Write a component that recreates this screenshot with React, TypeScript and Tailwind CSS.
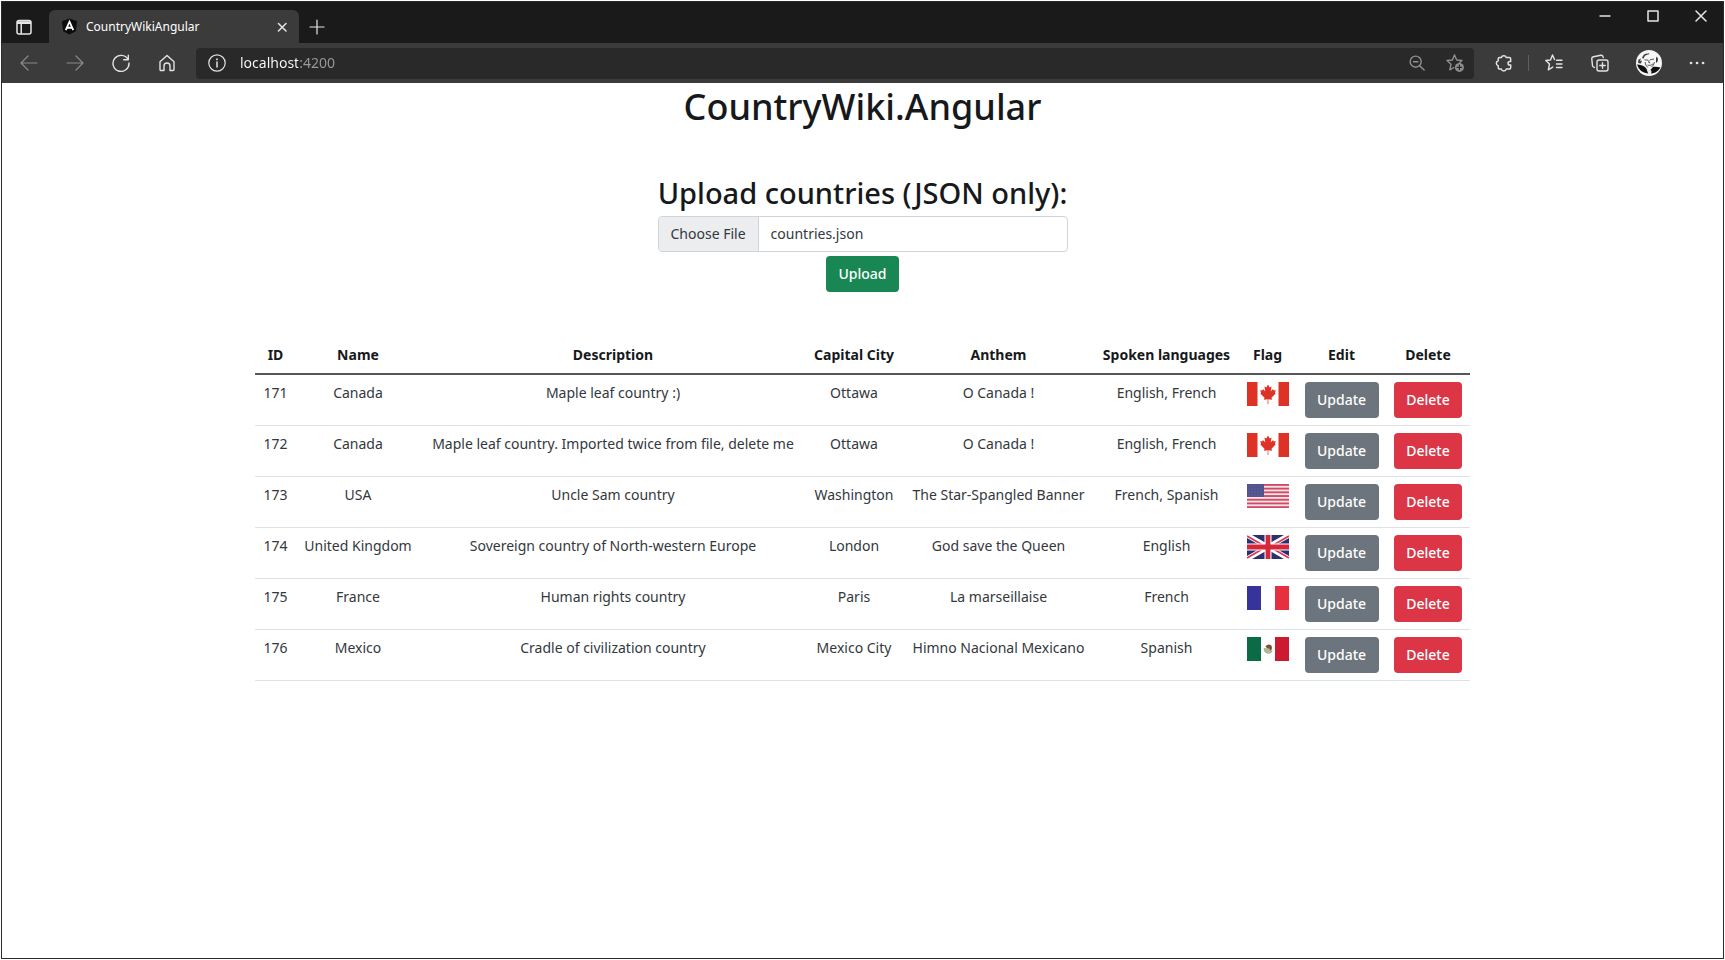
import type { ReactNode } from 'react';

type FlagCode = 'ca' | 'us' | 'gb' | 'fr' | 'mx';

interface Country {
  id: number;
  name: string;
  description: string;
  capital: string;
  anthem: string;
  languages: string;
  flag: FlagCode;
}

const countries: Country[] = [
  { id: 171, name: 'Canada', description: 'Maple leaf country :)', capital: 'Ottawa', anthem: 'O Canada !', languages: 'English, French', flag: 'ca' },
  { id: 172, name: 'Canada', description: 'Maple leaf country. Imported twice from file, delete me', capital: 'Ottawa', anthem: 'O Canada !', languages: 'English, French', flag: 'ca' },
  { id: 173, name: 'USA', description: 'Uncle Sam country', capital: 'Washington', anthem: 'The Star-Spangled Banner', languages: 'French, Spanish', flag: 'us' },
  { id: 174, name: 'United Kingdom', description: 'Sovereign country of North-western Europe', capital: 'London', anthem: 'God save the Queen', languages: 'English', flag: 'gb' },
  { id: 175, name: 'France', description: 'Human rights country', capital: 'Paris', anthem: 'La marseillaise', languages: 'French', flag: 'fr' },
  { id: 176, name: 'Mexico', description: 'Cradle of civilization country', capital: 'Mexico City', anthem: 'Himno Nacional Mexicano', languages: 'Spanish', flag: 'mx' },
];

const headings = ['ID', 'Name', 'Description', 'Capital City', 'Anthem', 'Spoken languages', 'Flag', 'Edit', 'Delete'];

const flagArt: Record<FlagCode, ReactNode> = {
  ca: (
    <>
      <rect width="42" height="24" fill="#fff" />
      <rect width="10.5" height="24" fill="#de3226" />
      <rect x="31.5" width="10.5" height="24" fill="#de3226" />
      <path
        d="M21 2.500l-1.700 3-1.900-.9.9 4.600-2.400-2.200-.5 1.400-2.200-.4.9 3-.8.6 4.200 4.200-.6 2 3.800-.6-.1 4.800h.8l-.1-4.800 3.800.6-.6-2 4.200-4.200-.8-.6.9-3-2.200.4-.5-1.400-2.400 2.200.9-4.600-1.900.9z"
        fill="#de3226"
      />
    </>
  ),
  us: (
    <>
      <rect width="42" height="24" fill="#f6e4e8" />
      {[0, 1, 2, 3, 4, 5, 6].map((n) => (
        <rect key={n} y={n * 3.7} width="42" height="1.85" fill="#cf4a64" />
      ))}
      <rect width="17" height="12.9" fill="#51538c" />
      {[2, 5, 8, 11].map((y) => (
        <path key={y} d={`M1.5 ${y}h15`} stroke="#7475a6" strokeWidth="0.8" strokeDasharray="1 2" />
      ))}
    </>
  ),
  gb: (
    <>
      <rect width="42" height="24" fill="#2d2f73" />
      <path d="M0 0l42 24M42 0L0 24" stroke="#fff" strokeWidth="5" />
      <path d="M0 1l19 11M42 23L23 12M42 1L23 12M0 23l19-11" stroke="#d93a4c" strokeWidth="1.8" />
      <path d="M21 0v24M0 12h42" stroke="#fff" strokeWidth="7" />
      <path d="M21 0v24M0 12h42" stroke="#d5263c" strokeWidth="4.8" />
    </>
  ),
  fr: (
    <>
      <rect width="42" height="24" fill="#fff" />
      <rect width="14" height="24" fill="#36339a" />
      <rect x="28" width="14" height="24" fill="#e6303f" />
    </>
  ),
  mx: (
    <>
      <rect width="42" height="24" fill="#fff" />
      <rect width="14" height="24" fill="#0b6b47" />
      <rect x="28" width="14" height="24" fill="#cc1b30" />
      <path d="M17.500 11a4 4.600 0 0 0 7.500 2.500" fill="none" stroke="#8fb8a4" strokeWidth="1.600" />
      <ellipse cx="21" cy="12.800" rx="3" ry="2.600" fill="#b9b690" />
      <path d="M18.500 9.500c1-2 4.500-2.800 5.800-1 1.200 2 .8 4-.8 5.500-.2-1.800-1.200-2.600-2.600-2.800-1-.2-2-.8-2.400-1.700z" fill="#7d5334" />
    </>
  ),
};

function Flag({ code, country }: { code: FlagCode; country: string }) {
  return (
    <svg role="img" aria-label={country} viewBox="0 0 42 24" className="mx-auto block h-6 w-[42px]">
      {flagArt[code]}
    </svg>
  );
}

function Icon({ size = 'size-[18px]', width = 1.2, children }: { size?: string; width?: number; children: ReactNode }) {
  return (
    <svg viewBox="0 0 18 18" fill="none" stroke="currentColor" strokeWidth={width} strokeLinecap="round" strokeLinejoin="round" className={`${size} block shrink-0`}>
      {children}
    </svg>
  );
}

function ChromeButton({ label, className = '', children }: { label: string; className?: string; children: ReactNode }) {
  return (
    <button type="button" aria-label={label} className={`flex shrink-0 items-center justify-center ${className}`}>
      {children}
    </button>
  );
}

function TitleBar() {
  return (
    <div className="flex h-[41px] items-end justify-between bg-[#1a1a1a] text-[#e6e6e6]">
      <div className="flex items-end">
        <ChromeButton label="Tab actions" className="h-[33px] w-[47px] pr-1">
          <Icon width={1.5}>
            <rect x="2" y="2.5" width="14" height="13.5" rx="2" />
            <path d="M2.5 4h13M2.5 5.2h13M6.2 6v9.5" />
          </Icon>
        </ChromeButton>
        <div className="flex h-[33px] w-[250px] items-center rounded-t-md bg-[#3b3b3b] pr-2 pl-3">
          <svg viewBox="0 0 18 18" className="size-[17px] shrink-0">
            <path d="M9 .5l8 2.9-1.3 10.6L9 17.5 2.3 14 1 3.4z" fill="#0c0c0c" />
            <path d="M5 12.8L9 3.8l4 9M6.700 10.300h4.600" fill="none" stroke="#fff" strokeWidth="1.900" />
          </svg>
          <span className="ml-2 flex-1 text-xs text-white">CountryWikiAngular</span>
          <ChromeButton label="Close tab" className="size-[18px]">
            <Icon size="size-4" width={1.7}>
              <path d="M5 5l8.500 8.500M13.500 5L5 13.500" />
            </Icon>
          </ChromeButton>
        </div>
        <ChromeButton label="New tab" className="h-[33px] w-9">
          <Icon>
            <path d="M9 2v14M2 9h14" />
          </Icon>
        </ChromeButton>
      </div>
      <div className="-mr-0.5 flex self-start">
        <ChromeButton label="Minimize" className="h-7 w-12">
          <Icon width={1.4}>
            <path d="M4 9h10" />
          </Icon>
        </ChromeButton>
        <ChromeButton label="Maximize" className="h-7 w-12">
          <Icon width={1.5}>
            <rect x="4" y="4" width="10" height="10" />
          </Icon>
        </ChromeButton>
        <ChromeButton label="Close window" className="h-7 w-12">
          <Icon width={1.5}>
            <path d="M4 4l10 10M14 4L4 14" />
          </Icon>
        </ChromeButton>
      </div>
    </div>
  );
}

function Toolbar() {
  return (
    <div className="flex h-10 items-center bg-[#3b3b3b] text-[#e3e3e3]">
      <nav className="flex items-center pl-1" aria-label="Browser navigation">
        <ChromeButton label="Back" className="h-8 w-[46px] text-[#8a8a8a]">
          <Icon>
            <path d="M1 9h16M8 2L1 9l7 7" />
          </Icon>
        </ChromeButton>
        <ChromeButton label="Forward" className="h-8 w-[46px] text-[#8a8a8a]">
          <Icon>
            <path d="M1 9h16M10 2l7 7-7 7" />
          </Icon>
        </ChromeButton>
        <ChromeButton label="Refresh" className="h-8 w-[46px]">
          <Icon width={1.4}>
            <path d="M16 5.500A8 8 0 1 0 17 9M16.300 1.200v4.600h-4.600" />
          </Icon>
        </ChromeButton>
        <ChromeButton label="Home" className="h-8 w-[46px]">
          <Icon width={1.4}>
            <path d="M2 7.800L9 1.500l7 6.300V15.500a1 1 0 0 1-1 1h-3v-4.500a3 3 0 0 0-6 0v4.500H3a1 1 0 0 1-1-1z" />
          </Icon>
        </ChromeButton>
      </nav>
      <div className="ml-1.5 flex h-[31px] flex-1 items-center rounded bg-[#292929] px-3">
        <Icon width={1.2}>
          <circle cx="9" cy="9" r="8.2" />
          <path d="M9 8v5" strokeWidth="1.5" />
          <path d="M9 5.200v.2" strokeWidth="1.7" />
        </Icon>
        <input
          type="text"
          aria-label="Address"
          defaultValue="localhost:4200"
          className="ml-3.5 min-w-0 flex-1 bg-[linear-gradient(to_right,#ffffff_58px,#9a9a9a_58px)] bg-clip-text text-sm text-transparent outline-none"
        />
        <ChromeButton label="Zoom" className="size-[38px] text-[#8f8f8f]">
          <Icon size="size-4" width={1.6}>
            <circle cx="7.5" cy="7.5" r="6.2" />
            <path d="M12 12l5 5M5 7.500h5" />
          </Icon>
        </ChromeButton>
        <ChromeButton label="Add to favorites" className="-mr-3 size-[38px] text-[#8f8f8f]">
          <Icon width={1.4}>
            <path d="M8.500 1l2.200 5 5.300.5-2.500 2.300M8.500 1L6.300 6 1 6.500l4 3.700-1.200 5.600 4-2.300" />
            <circle cx="13.4" cy="13.4" r="4.500" fill="currentColor" stroke="none" />
            <path d="M13.400 11.200v4.400M11.200 13.400h4.400" stroke="#292929" />
          </Icon>
        </ChromeButton>
      </div>
      <div className="flex items-center">
        <ChromeButton label="Extensions" className="ml-1.5 h-8 w-12">
          <Icon width={1.5}>
            <path d="M6.300 3.600a2.600 2.600 0 0 1 5 0h2.900a1.500 1.500 0 0 1 1.500 1.500v2.300h-.9a1.800 1.800 0 0 0 0 3.600h.9v2.600a1.500 1.500 0 0 1-1.500 1.500h-2.900a2.600 2.600 0 0 1-5 0H4.700a1.500 1.500 0 0 1-1.500-1.500v-1.900a2.600 2.600 0 0 1 0-5V5.100a1.500 1.500 0 0 1 1.500-1.500z" />
          </Icon>
        </ChromeButton>
        <span className="h-4 w-px bg-[#5e5e5e]" />
        <ChromeButton label="Favorites" className="h-8 w-[50px]">
          <Icon width={1.4}>
            <path d="M11.500 6.300h5.500M11.500 10h5.500M11.500 13.500h5.500M9.500 5.500L7.500 1 5.500 6 .8 6.500l3.700 3.500-1.200 5.800 4.400-2.700" />
          </Icon>
        </ChromeButton>
        <ChromeButton label="Collections" className="h-8 w-[42px]">
          <Icon width={1.4}>
            <rect x="6" y="6" width="11" height="11" rx="2" />
            <path d="M11.500 8.800v5.400M8.800 11.500h5.400M3.500 13.500l-1.200-.7a2 2 0 0 1-.8-1.200L.8 5a2 2 0 0 1 1.600-2.200l7.400-1.500a2 2 0 0 1 2.300 1.500l.1.700" />
          </Icon>
        </ChromeButton>
        <ChromeButton label="Profile" className="h-8 w-14">
          <svg viewBox="0 0 26 26" className="size-[26px]">
            <circle cx="13" cy="13" r="13" fill="#f6f6f6" />
            <path d="M1 14.500c3 .5 6 .8 8 2.500l2.500 3 1.500 1.500 4-4.500c2.500-.5 5 0 7.500.5A13 13 0 0 1 1 14.500z" fill="#101010" />
            <path d="M10.500 19l2 1.500 1.500-1 1.500 1.500-.5 4.500-2 .5z" fill="#ececec" />
            <path d="M8 4.500c1.500-.8 3-.4 4.500-1.200l1 .8c-2 1-4 .8-5 2.400L7.300 9 6 7.500z" fill="#3a3a3a" />
            <path d="M2.500 9.500l2.500-1-1 2.500 2-.5-1 3-3-.5z" fill="#444" />
            <path d="M20.500 6.500l1.500 2-.5 3-1.500 1.500v-4z" fill="#333" />
            <path d="M8.500 9.800l3.500.4M14 9.800l4-.8M13 10l-.3 2.500 1.500.3M11.500 15c2 .8 4 .3 5.500-1.200M9 12l.8 3 2 2.500M18.500 12l-1.200 3.200-2 2" stroke="#444" strokeWidth="0.9" fill="none" />
          </svg>
        </ChromeButton>
        <ChromeButton label="Settings and more" className="mr-1.5 h-8 w-10">
          <Icon>
            <path d="M3 9h.1M9 9h.1M15 9h.1" strokeWidth="2.6" />
          </Icon>
        </ChromeButton>
      </div>
    </div>
  );
}

function UploadForm() {
  return (
    <form className="mt-[42px] flex w-[410px] max-w-full flex-col items-center" onSubmit={(event) => event.preventDefault()}>
      <h2 className="text-[29px] leading-10 font-medium whitespace-nowrap">
        <label htmlFor="countries-file">Upload countries (JSON only):</label>
      </h2>
      <label htmlFor="countries-file" className="mt-[3px] flex h-9 w-full cursor-pointer overflow-hidden rounded border border-[#ced4da] text-sm text-[#33383d]">
        <span className="flex items-center border-r border-[#ced4da] bg-[#ebedef] px-3">Choose File</span>
        <span className="flex items-center px-3">countries.json</span>
        <input id="countries-file" type="file" accept="application/json" className="sr-only" />
      </label>
      <button type="submit" className="mt-1 h-9 rounded bg-[#198754] px-3 text-sm font-medium text-white">
        Upload
      </button>
    </form>
  );
}

function CountryTable() {
  return (
    <table className="mt-[45px] w-[1215px] max-w-full table-fixed border-collapse text-center text-sm text-[#33383d]">
      <colgroup>
        <col className="w-[41px]" />
        <col className="w-[124px]" />
        <col className="w-[386px]" />
        <col className="w-[96px]" />
        <col className="w-[193px]" />
        <col className="w-[143px]" />
        <col className="w-[59px]" />
        <col className="w-[89px]" />
        <col className="w-[84px]" />
      </colgroup>
      <thead>
        <tr className="h-[37px] border-b-2 border-[#55575a] text-[#16191c]">
          {headings.map((heading) => (
            <th key={heading} scope="col" className="p-0 text-sm font-bold whitespace-nowrap">
              {heading}
            </th>
          ))}
        </tr>
      </thead>
      <tbody>
        {countries.map((country) => (
          <tr key={country.id} className="border-b border-[#dee2e6] align-top whitespace-nowrap">
            <td className="pt-2">{country.id}</td>
            <td className="pt-2">{country.name}</td>
            <td className="pt-2">{country.description}</td>
            <td className="pt-2">{country.capital}</td>
            <td className="pt-2">{country.anthem}</td>
            <td className="pt-2">{country.languages}</td>
            <td className="pt-[7px]">
              <Flag code={country.flag} country={country.name} />
            </td>
            <td className="py-[7px]">
              <button type="button" className="h-9 w-[74px] rounded bg-[#6c757d] font-medium text-white">
                Update
              </button>
            </td>
            <td className="py-[7px]">
              <button type="button" className="h-9 w-[68px] rounded bg-[#dc3545] font-medium text-white">
                Delete
              </button>
            </td>
          </tr>
        ))}
      </tbody>
    </table>
  );
}

export default function App() {
  return (
    <div className="min-h-screen bg-white p-px font-['Noto_Sans','Open_Sans',sans-serif]">
      <div className="flex min-h-[calc(100vh-2px)] flex-col border border-[#2a2a2a]">
        <header>
          <TitleBar />
          <Toolbar />
        </header>
        <main className="flex flex-1 flex-col items-center text-[#16191c]">
          <h1 className="text-[36px] leading-[48px] font-medium">CountryWiki.Angular</h1>
          <UploadForm />
          <CountryTable />
        </main>
      </div>
    </div>
  );
}
